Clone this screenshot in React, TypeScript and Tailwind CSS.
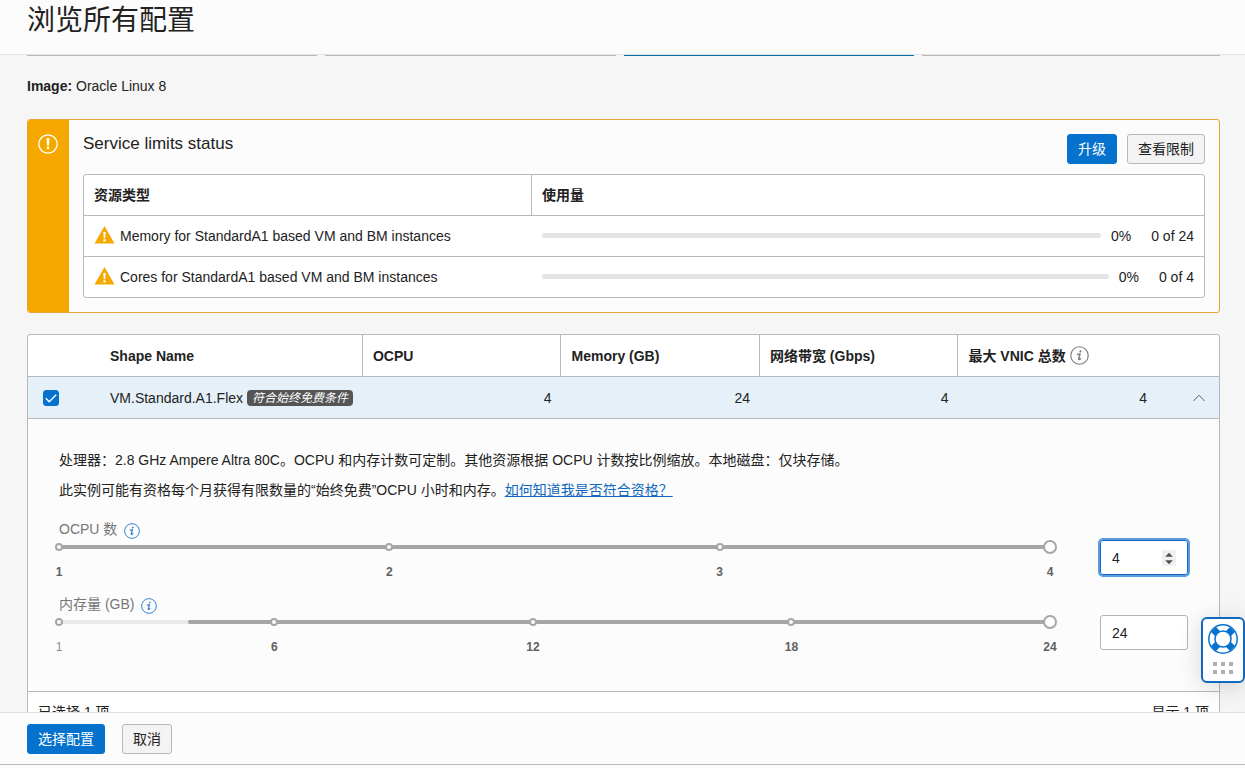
import { useState } from "react";

const limits = [
  { name: "Memory for StandardA1 based VM and BM instances", used: 0, total: 24 },
  { name: "Cores for StandardA1 based VM and BM instances", used: 0, total: 4 },
];

const primaryButton =
  "h-[30px] cursor-pointer rounded-[3px] border border-[#0572ce] bg-[#0572ce] px-2.5 text-sm leading-5 text-white";
const plainButton =
  "h-[30px] cursor-pointer rounded-[3px] border border-[#b8b8b8] bg-[#f3f3f3] px-2.5 text-sm leading-5 text-[#222]";

function InfoIcon({ className }: { className: string }) {
  return (
    <svg viewBox="0 0 20 20" className={className} fill="none" aria-hidden="true">
      <circle cx="10" cy="10" r="9.2" stroke="currentColor" strokeWidth="1.2" />
      <circle cx="11" cy="5.7" r="1.1" fill="currentColor" />
      <path
        d="M7.900 8.900l2.700-.5-1.500 5.300c-.2 1 .7.900 2-.4"
        stroke="currentColor"
        strokeWidth="1.5"
        strokeLinecap="round"
        strokeLinejoin="round"
      />
    </svg>
  );
}

function WarningIcon() {
  return (
    <svg viewBox="0 0 21 18" className="h-[18px] w-[21px] shrink-0" aria-hidden="true">
      <path d="M10.500 0L20.500 17.500H.5z" fill="#f5a800" />
      <path d="M9.300 6h2.400l-.5 6.200H9.800z" fill="#fff" />
      <rect x="9.400" y="13.300" width="2.200" height="2.200" fill="#fff" />
    </svg>
  );
}

type SliderProps = {
  id: string;
  label: string;
  max: number;
  stops: number[];
  enabledFrom: number;
  value: number;
  focused?: boolean;
  onChange: (value: number) => void;
};

function SliderField({ id, label, max, stops, enabledFrom, value, focused, onChange }: SliderProps) {
  const percent = (stop: number) => ((stop - 1) / (max - 1)) * 100;
  return (
    <div className="flex items-start gap-[50px]">
      <div className="min-w-0 flex-1">
        <div className="mb-0.5 flex h-[18px] items-center gap-[7px] text-sm leading-5 text-[#767676]">
          <label htmlFor={id}>{label}</label>
          <InfoIcon className="mt-1 size-4 text-[#2f7fd0]" />
        </div>
        <div className="relative h-3.5">
          <div className="absolute inset-x-0 top-[5px] h-1 rounded-full bg-[#e9e9e9]" />
          <div
            className="absolute right-0 top-[5px] h-1 rounded-full bg-[#a6a6a6]"
            style={{ left: `${percent(enabledFrom)}%` }}
          />
          {stops.map((stop) => (
            <span
              key={stop}
              className="absolute top-[3px] size-2 -translate-x-1/2 rounded-full border-2 border-[#a6a6a6] bg-white"
              style={{ left: `${percent(stop)}%` }}
            />
          ))}
          <input
            id={id}
            type="range"
            min={1}
            max={max}
            value={value}
            onChange={(e) => onChange(Number(e.target.value))}
            className="absolute -left-[7px] top-0 h-3.5 w-[calc(100%+14px)] cursor-pointer appearance-none bg-transparent [&::-webkit-slider-thumb]:size-3.5 [&::-webkit-slider-thumb]:appearance-none [&::-webkit-slider-thumb]:rounded-full [&::-webkit-slider-thumb]:border-2 [&::-webkit-slider-thumb]:border-solid [&::-webkit-slider-thumb]:border-[#a6a6a6] [&::-webkit-slider-thumb]:bg-white"
          />
        </div>
        <div className="relative mt-2.5 h-4 text-xs leading-4">
          {stops.map((stop) => (
            <span
              key={stop}
              className={
                stop < enabledFrom
                  ? "absolute -translate-x-1/2 text-[#8a8a8a]"
                  : "absolute -translate-x-1/2 font-bold text-[#606060]"
              }
              style={{ left: `${percent(stop)}%` }}
            >
              {stop}
            </span>
          ))}
        </div>
      </div>
      <div className="relative mt-5">
        <input
          type="number"
          aria-label={label}
          value={value}
          onChange={(e) => onChange(Number(e.target.value))}
          className={
            focused
              ? "block h-[35px] w-[88px] appearance-none rounded-[3px] border border-[#1a66bd] bg-white px-[11px] text-sm leading-5 text-[#222] outline-2 outline-[#5b9bdf] [&::-webkit-inner-spin-button]:appearance-none"
              : "block h-[35px] w-[88px] appearance-none rounded-[3px] border border-[#b5b5b5] bg-white px-[11px] text-sm leading-5 text-[#222] [&::-webkit-inner-spin-button]:appearance-none"
          }
        />
        {focused && (
          <span className="pointer-events-none absolute inset-y-0 right-3 flex items-center">
            <svg viewBox="0 0 14 16" className="h-4 w-3.5" aria-hidden="true">
              <rect width="14" height="16" fill="#f0f0f0" />
              <path d="M3.200 6.700L7 2.700l3.800 4zM3.200 10.300L7 14.300l3.800-4z" fill="#505050" />
            </svg>
          </span>
        )}
      </div>
    </div>
  );
}

function ServiceLimits() {
  return (
    <section className="mt-[23px] flex overflow-hidden rounded-[3px] border border-[#e5a530] bg-[#fcfcfc]">
      <div className="-ml-px flex w-[42px] shrink-0 justify-center bg-[#f5a800] pt-3.5">
        <svg viewBox="0 0 20 20" className="size-5" aria-hidden="true">
          <circle cx="10" cy="10" r="9.200" fill="none" stroke="#fff" strokeWidth="1.300" />
          <path d="M8.600 4h2.800l-.4 7.500H9z" fill="#fff" />
          <rect x="8.800" y="12.700" width="2.400" height="2.400" fill="#fff" />
        </svg>
      </div>
      <div className="min-w-0 flex-1 p-3.5">
        <div className="flex items-start justify-between">
          <h2 className="text-[17px] leading-5">Service limits status</h2>
          <div className="flex gap-2.5">
            <button type="button" className={primaryButton}>升级</button>
            <button type="button" className={plainButton}>查看限制</button>
          </div>
        </div>
        <div className="mt-2.5 overflow-hidden rounded-[3px] border border-[#b9b9b9] bg-white">
          <table className="w-full table-fixed border-separate border-spacing-0 text-left text-sm leading-5">
            <thead>
              <tr className="h-[41px]">
                <th className="w-2/5 border-r border-b border-[#b9b9b9] px-2.5 py-0 font-bold">资源类型</th>
                <th className="border-b border-[#b9b9b9] px-2.5 py-0 font-bold">使用量</th>
              </tr>
            </thead>
            <tbody>
              {limits.map((limit, i) => {
                const last = i === limits.length - 1;
                const cell = last ? "h-10 px-2.5 py-0" : "h-[41px] border-b border-[#b9b9b9] px-2.5 py-0";
                return (
                  <tr key={limit.name}>
                    <td className={cell}>
                      <div className="flex items-start gap-[5px]">
                        <WarningIcon />
                        {limit.name}
                      </div>
                    </td>
                    <td className={cell}>
                      <div className="flex items-start">
                        <div className="mt-[7px] h-[5px] flex-1 rounded-full bg-[#e4e4e4]" />
                        <span className="ml-2.5">0%</span>
                        <span className="ml-5">
                          {limit.used} of {limit.total}
                        </span>
                      </div>
                    </td>
                  </tr>
                );
              })}
            </tbody>
          </table>
        </div>
      </div>
    </section>
  );
}

const shapeHead = "border-r border-b border-[#b3b9bf] px-2.5 py-0 text-left font-bold";
const shapeCell = "border-b border-[#b3bcc4] px-2.5 py-0";

function ShapeTable() {
  const [ocpu, setOcpu] = useState(4);
  const [memory, setMemory] = useState(24);
  return (
    <section className="mt-[21px] rounded-[3px] border border-[#b3b9bf] bg-white">
      <table className="w-full table-fixed border-separate border-spacing-0 text-sm leading-5">
        <colgroup>
          <col className="w-[72px]" />
          <col />
          <col className="w-1/6" />
          <col className="w-1/6" />
          <col className="w-1/6" />
          <col className="w-1/6" />
          <col className="w-[62px]" />
        </colgroup>
        <thead>
          <tr className="h-[42px]">
            <th className="border-b border-[#b3b9bf] p-0" />
            <th className={shapeHead}>Shape Name</th>
            <th className={shapeHead}>OCPU</th>
            <th className={shapeHead}>Memory (GB)</th>
            <th className={shapeHead}>网络带宽 (Gbps)</th>
            <th colSpan={2} className="border-b border-[#b3b9bf] px-2.5 py-0 text-left font-bold">
              <span className="flex items-center gap-1">
                最大 VNIC 总数
                <InfoIcon className="size-[19px] text-[#7d7d7d]" />
              </span>
            </th>
          </tr>
        </thead>
        <tbody>
          <tr className="h-[42px] bg-[#e5f0f8]">
            <td className="border-b border-[#b3bcc4] py-0 pl-[15px]">
              <label className="relative block size-4">
                <input
                  type="checkbox"
                  defaultChecked
                  aria-label="VM.Standard.A1.Flex"
                  className="peer block size-4 appearance-none rounded-[3px] border border-[#0572ce] bg-white checked:bg-[#0572ce]"
                />
                <svg
                  viewBox="0 0 16 16"
                  fill="none"
                  className="pointer-events-none absolute inset-0 size-4 opacity-0 peer-checked:opacity-100"
                  aria-hidden="true"
                >
                  <path d="M2.800 8.300l3.400 3.400 7-7" stroke="#fff" strokeWidth="1.500" />
                </svg>
              </label>
            </td>
            <td className="border-b border-[#b3bcc4] py-0 pl-2.5 whitespace-nowrap">
              <div className="flex items-center gap-1">
                VM.Standard.A1.Flex
                <span className="rounded-sm bg-[#555] px-[5px] text-xs leading-4 text-white italic">
                  符合始终免费条件
                </span>
              </div>
            </td>
            <td className={`${shapeCell} text-right`}>4</td>
            <td className={`${shapeCell} text-right`}>24</td>
            <td className={`${shapeCell} text-right`}>4</td>
            <td className={`${shapeCell} text-right`}>4</td>
            <td className="border-b border-[#b3bcc4] py-0 pr-3.5">
              <button type="button" aria-label="收起" className="ml-auto block cursor-pointer">
                <svg viewBox="0 0 12 8" fill="none" className="h-2 w-3" aria-hidden="true">
                  <path d="M.4 7L6 1.200 11.600 7" stroke="#666" strokeWidth="1" />
                </svg>
              </button>
            </td>
          </tr>
          <tr>
            <td colSpan={7} className="border-b border-[#b9b9b9] bg-[#fcfcfc] px-[31px] pt-[26px] pb-9">
              <p className="leading-[30px]">
                处理器：2.8 GHz Ampere Altra 80C。OCPU 和内存计数可定制。其他资源根据 OCPU 计数按比例缩放。本地磁盘：仅块存储。
              </p>
              <p className="leading-[30px]">
                此实例可能有资格每个月获得有限数量的“始终免费”OCPU 小时和内存。
                <a href="#eligibility" className="text-[#1068bf] underline">
                  如何知道我是否符合资格？
                </a>
              </p>
              <div className="mt-[15px] flex flex-col gap-[15px]">
                <SliderField
                  id="ocpu"
                  label="OCPU 数"
                  max={4}
                  stops={[1, 2, 3, 4]}
                  enabledFrom={1}
                  value={ocpu}
                  focused
                  onChange={setOcpu}
                />
                <SliderField
                  id="memory"
                  label="内存量 (GB)"
                  max={24}
                  stops={[1, 6, 12, 18, 24]}
                  enabledFrom={4}
                  value={memory}
                  onChange={setMemory}
                />
              </div>
            </td>
          </tr>
        </tbody>
      </table>
      <div className="flex h-10 items-center justify-between px-2.5 text-sm leading-5">
        <span>已选择 1 项</span>
        <span>显示 1 项</span>
      </div>
    </section>
  );
}

function HelpWidget() {
  return (
    <button
      type="button"
      aria-label="帮助"
      className="fixed right-0 bottom-[85px] flex h-[66px] w-11 cursor-pointer flex-col items-center gap-2 rounded-md border-2 border-[#1068bf] bg-white pt-[5px] shadow-[0_4px_24px_rgba(0,0,0,0.15)]"
    >
      <svg viewBox="0 0 30 30" className="size-[30px]" fill="none" aria-hidden="true">
        <circle cx="15" cy="15" r="14.200" fill="#fff" stroke="#0572ce" strokeWidth="1.500" />
        <path d="M5.500 5.500l19 19M24.500 5.500l-19 19" stroke="#0572ce" strokeWidth="7" />
        <circle cx="15" cy="15" r="8" fill="#fff" stroke="#0572ce" strokeWidth="1.500" />
      </svg>
      <span className="grid grid-cols-3 gap-1">
        {[0, 1, 2, 3, 4, 5].map((dot) => (
          <span key={dot} className="size-1 bg-[#b0b0b0]" />
        ))}
      </span>
    </button>
  );
}

export default function App() {
  const steps = [false, false, true, false];
  return (
    <div className="flex h-screen flex-col bg-[#fcfcfc] font-['Liberation_Sans','Noto_Sans_CJK_SC',sans-serif] text-[#222]">
      <header className="h-[55px] shrink-0 border-b border-[#e2e2e2] px-[27px]">
        <h1 className="text-[28px] leading-[42px] font-normal">浏览所有配置</h1>
      </header>
      <main className="min-h-0 flex-1 overflow-y-auto bg-[#f6f6f6] pr-[25px] pl-[27px] pb-5 [scrollbar-width:none]">
        <div className="grid grid-cols-4">
          {steps.map((active, i) => (
            <div key={i} className={i < 3 ? "pr-2" : ""}>
              <div className={active ? "h-px bg-[#0b6ba8]" : "h-px bg-[#b9b9b9]"} />
            </div>
          ))}
        </div>
        <p className="mt-5 text-sm leading-5">
          <strong className="font-bold">Image:</strong> Oracle Linux 8
        </p>
        <ServiceLimits />
        <ShapeTable />
      </main>
      <footer className="mb-[3px] flex shrink-0 gap-[17px] border-t border-b border-t-[#e2e2e2] border-b-[#b9b9b9] px-[27px] pt-[11px] pb-2.5">
        <button type="button" className={primaryButton}>选择配置</button>
        <button type="button" className={plainButton}>取消</button>
      </footer>
      <HelpWidget />
    </div>
  );
}
